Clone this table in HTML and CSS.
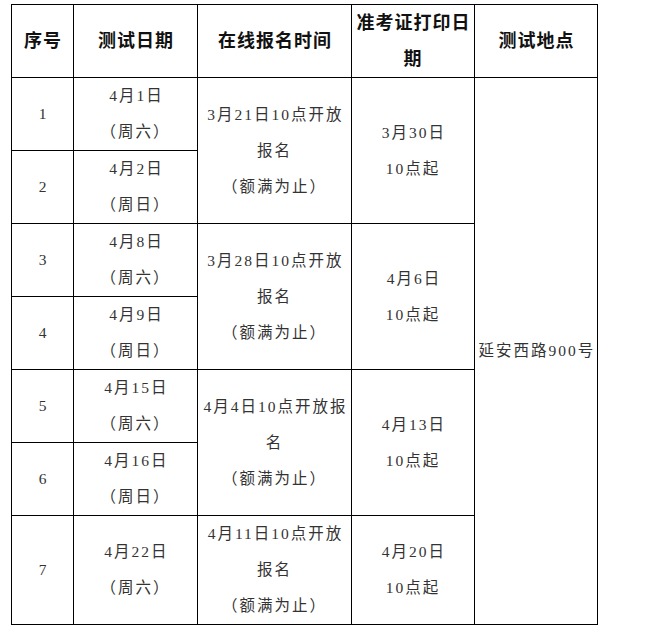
FILE: index.html
```html
<!DOCTYPE html>
<html lang="zh-CN">
<head>
<meta charset="utf-8">
<title>测试安排</title>
<link rel="stylesheet" href="styles.css">
</head>
<body>
<table class="schedule">
  <colgroup>
    <col class="c-no">
    <col class="c-date">
    <col class="c-reg">
    <col class="c-print">
    <col class="c-place">
  </colgroup>
  <tr class="head">
    <th>序号</th>
    <th>测试日期</th>
    <th>在线报名时间</th>
    <th>准考证打印日<br>期</th>
    <th>测试地点</th>
  </tr>
  <tr>
    <td>1</td>
    <td>4月1日<br>（周六）</td>
    <td rowspan="2">3月21日10点开放<br>报名<br>（额满为止）</td>
    <td rowspan="2">3月30日<br>10点起</td>
    <td rowspan="7">延安西路900号</td>
  </tr>
  <tr>
    <td>2</td>
    <td>4月2日<br>（周日）</td>
  </tr>
  <tr>
    <td>3</td>
    <td>4月8日<br>（周六）</td>
    <td rowspan="2">3月28日10点开放<br>报名<br>（额满为止）</td>
    <td rowspan="2">4月6日<br>10点起</td>
  </tr>
  <tr>
    <td>4</td>
    <td>4月9日<br>（周日）</td>
  </tr>
  <tr>
    <td>5</td>
    <td>4月15日<br>（周六）</td>
    <td rowspan="2">4月4日10点开放报<br>名<br>（额满为止）</td>
    <td rowspan="2">4月13日<br>10点起</td>
  </tr>
  <tr>
    <td>6</td>
    <td>4月16日<br>（周日）</td>
  </tr>
  <tr class="last">
    <td>7</td>
    <td>4月22日<br>（周六）</td>
    <td>4月11日10点开放<br>报名<br>（额满为止）</td>
    <td>4月20日<br>10点起</td>
  </tr>
</table>
</body>
</html>
```
FILE: styles.css
```css
html, body {
  margin: 0;
  padding: 0;
  background: #ffffff;
}

.schedule {
  margin: 4px 0 0 11px;
  border-collapse: collapse;
  table-layout: fixed;
  width: 587px;
  font-family: "Liberation Serif", "Noto Sans CJK SC", serif;
  color: #333333;
}

.c-no { width: 62px; }
.c-date { width: 124px; }
.c-reg { width: 154px; }
.c-print { width: 123px; }
.c-place { width: 123px; }

.schedule th,
.schedule td {
  border: 1px solid #000000;
  padding: 0;
  text-align: center;
  vertical-align: middle;
  white-space: nowrap;
}

.schedule td {
  height: 72px;
  font-size: 15.5px;
  line-height: 36px;
  letter-spacing: 2px;
  text-indent: 2px;
}

.schedule th {
  height: 72px;
  font-size: 18px;
  line-height: 36px;
  font-weight: bold;
  color: #111111;
  letter-spacing: 1px;
  text-indent: 1px;
}

.schedule .last td {
  height: 108px;
}
```
